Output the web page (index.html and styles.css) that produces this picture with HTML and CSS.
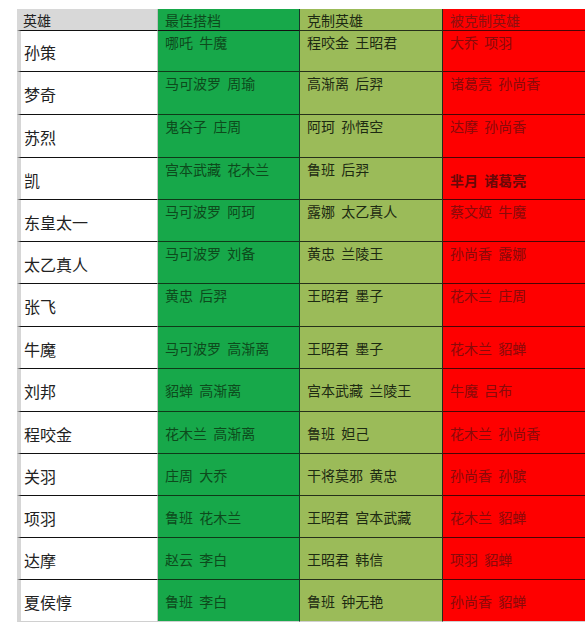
FILE: index.html
```html
<!DOCTYPE html>
<html lang="zh">
<head>
<meta charset="utf-8">
<title>英雄克制表</title>
<link rel="stylesheet" href="styles.css">
</head>
<body>
<div class="sheet">
  <div class="cell c1 head">英雄</div>
  <div class="cell c2 head">最佳搭档</div>
  <div class="cell c3 head">克制英雄</div>
  <div class="cell c4 head">被克制英雄</div>

  <div class="cell c1">孙策</div>
  <div class="cell c2 top">哪吒 牛魔</div>
  <div class="cell c3 top">程咬金 王昭君</div>
  <div class="cell c4 top">大乔 项羽</div>

  <div class="cell c1">梦奇</div>
  <div class="cell c2 top">马可波罗 周瑜</div>
  <div class="cell c3 top">高渐离 后羿</div>
  <div class="cell c4 top">诸葛亮 孙尚香</div>

  <div class="cell c1">苏烈</div>
  <div class="cell c2 top">鬼谷子 庄周</div>
  <div class="cell c3 top">阿珂 孙悟空</div>
  <div class="cell c4 top">达摩 孙尚香</div>

  <div class="cell c1">凯</div>
  <div class="cell c2 top">宫本武藏 花木兰</div>
  <div class="cell c3 top">鲁班 后羿</div>
  <div class="cell c4 strong">芈月 诸葛亮</div>

  <div class="cell c1">东皇太一</div>
  <div class="cell c2 top">马可波罗 阿珂</div>
  <div class="cell c3 top">露娜 太乙真人</div>
  <div class="cell c4 top">蔡文姬 牛魔</div>

  <div class="cell c1">太乙真人</div>
  <div class="cell c2 top">马可波罗 刘备</div>
  <div class="cell c3 top">黄忠 兰陵王</div>
  <div class="cell c4 top">孙尚香 露娜</div>

  <div class="cell c1">张飞</div>
  <div class="cell c2 top">黄忠 后羿</div>
  <div class="cell c3 top">王昭君 墨子</div>
  <div class="cell c4 top">花木兰 庄周</div>

  <div class="cell c1">牛魔</div>
  <div class="cell c2">马可波罗 高渐离</div>
  <div class="cell c3">王昭君 墨子</div>
  <div class="cell c4">花木兰 貂蝉</div>

  <div class="cell c1">刘邦</div>
  <div class="cell c2">貂蝉 高渐离</div>
  <div class="cell c3">宫本武藏 兰陵王</div>
  <div class="cell c4">牛魔 吕布</div>

  <div class="cell c1">程咬金</div>
  <div class="cell c2">花木兰 高渐离</div>
  <div class="cell c3">鲁班 妲己</div>
  <div class="cell c4">花木兰 孙尚香</div>

  <div class="cell c1">关羽</div>
  <div class="cell c2">庄周 大乔</div>
  <div class="cell c3">干将莫邪 黄忠</div>
  <div class="cell c4">孙尚香 孙膑</div>

  <div class="cell c1">项羽</div>
  <div class="cell c2">鲁班 花木兰</div>
  <div class="cell c3">王昭君 宫本武藏</div>
  <div class="cell c4">花木兰 貂蝉</div>

  <div class="cell c1">达摩</div>
  <div class="cell c2">赵云 李白</div>
  <div class="cell c3">王昭君 韩信</div>
  <div class="cell c4">项羽 貂蝉</div>

  <div class="cell c1 last">夏侯惇</div>
  <div class="cell c2 last">鲁班 李白</div>
  <div class="cell c3 last">鲁班 钟无艳</div>
  <div class="cell c4 last">孙尚香 貂蝉</div>
</div>
</body>
</html>
```

FILE: styles.css
```css
* {
  box-sizing: border-box;
}

html, body {
  margin: 0;
  padding: 0;
  background: #ffffff;
}

body {
  font-family: "Noto Sans CJK SC", "Noto Sans", sans-serif;
  width: 585px;
  height: 622px;
  overflow: hidden;
  padding: 9px 0 0 17px;
}

.sheet {
  display: grid;
  grid-template-columns: 141px 142px 143px 142px;
  grid-template-rows: 22px 41px 43px 43px 42px 42px 42px 43px 42px 43px 42px 42px 42px 42px 42px;
  width: 568px;
}

.cell {
  display: flex;
  align-items: center;
  font-size: 14px;
  line-height: 20px;
  white-space: pre;
  word-spacing: 3px;
  border-bottom: 1px solid #111;
  padding-left: 7px;
}

.c1 {
  background: #ffffff;
  color: #222222;
  font-size: 16px;
  border-left: 4px solid #d6d6d6;
  border-right: 1px solid #c6c6c6;
  padding-left: 3px;
  padding-top: 2px;
}

.c2 {
  background: #17a84a;
  color: #0d4a1c;
  border-bottom-color: #0e3a18;
  border-right: 1px solid #17382a;
}

.c3 {
  background: #9bbb59;
  color: #1d2a12;
  border-bottom-color: #26301a;
  border-right: 1px solid #2a2a18;
}

.c4 {
  background: #fe0000;
  color: #880a0a;
  border-bottom-color: #4a0505;
}

.head {
  font-size: 14px;
  padding-top: 0;
}

.c1.head {
  background: #d8d8d8;
  border-left-color: #d8d8d8;
  border-right: 1px solid #bdbdbd;
  padding-left: 2px;
}

.c2.head {
  border-bottom-color: #111;
}

.c4.head {
  color: #8c1010;
}

.top {
  align-items: flex-start;
  padding-top: 1px;
}

.strong {
  font-weight: 700;
  color: #6a0808;
  padding-top: 2px;
}

.last {
  border-bottom-color: #d0d0d0;
}
```
